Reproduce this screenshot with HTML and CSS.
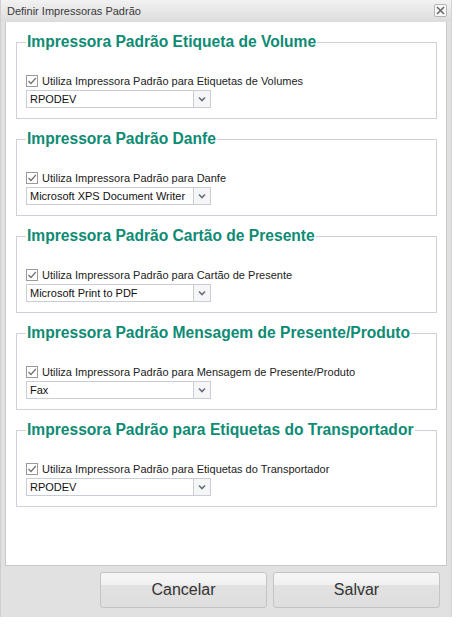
FILE: index.html
```html
<!DOCTYPE html>
<html lang="pt-br">
<head>
  <meta charset="UTF-8" />
  <title>Definir Impressoras Padrão</title>
  <link rel="stylesheet" href="styles.css">
</head>
<body>
<div class="janela">
  <div class="titulo">
    Definir Impressoras Padrão
    <span class="fechar">
      <svg width="9" height="9" viewBox="0 0 9 9"><path d="M1 1L8 8M8 1L1 8" stroke="#6a6a6a" stroke-width="1.6"/></svg>
    </span>
  </div>
  <div class="conteudo">
    <fieldset class="grupo">
      <legend>Impressora Padrão Etiqueta de Volume</legend>
      <label class="check"><span class="caixa"></span>Utiliza Impressora Padrão para Etiquetas de Volumes</label>
      <div class="combo"><span class="valor">RPODEV</span><span class="seta"></span></div>
    </fieldset>
    <fieldset class="grupo">
      <legend>Impressora Padrão Danfe</legend>
      <label class="check"><span class="caixa"></span>Utiliza Impressora Padrão para Danfe</label>
      <div class="combo"><span class="valor">Microsoft XPS Document Writer</span><span class="seta"></span></div>
    </fieldset>
    <fieldset class="grupo">
      <legend>Impressora Padrão Cartão de Presente</legend>
      <label class="check"><span class="caixa"></span>Utiliza Impressora Padrão para Cartão de Presente</label>
      <div class="combo"><span class="valor">Microsoft Print to PDF</span><span class="seta"></span></div>
    </fieldset>
    <fieldset class="grupo">
      <legend>Impressora Padrão Mensagem de Presente/Produto</legend>
      <label class="check"><span class="caixa"></span>Utiliza Impressora Padrão para Mensagem de Presente/Produto</label>
      <div class="combo"><span class="valor">Fax</span><span class="seta"></span></div>
    </fieldset>
    <fieldset class="grupo">
      <legend>Impressora Padrão para Etiquetas do Transportador</legend>
      <label class="check"><span class="caixa"></span>Utiliza Impressora Padrão para Etiquetas do Transportador</label>
      <div class="combo"><span class="valor">RPODEV</span><span class="seta"></span></div>
    </fieldset>
  </div>
  <div class="rodape">
    <button class="botao">Cancelar</button>
    <button class="botao">Salvar</button>
  </div>
</div>
</body>
</html>
```
FILE: styles.css
```css
body {
  margin: 0;
  background: #fff;
  font-family: 'Liberation Sans', Arial, sans-serif;
}
.janela {
  width: 452px;
  height: 617px;
  background: #e1e1e1;
  box-sizing: border-box;
  border-left: 1px solid #cfcfcf;
  border-right: 1px solid #d4d4d4;
  display: flex;
  flex-direction: column;
}
.titulo {
  height: 22px;
  line-height: 22px;
  padding-left: 6px;
  font-size: 11px;
  color: #3a3a3a;
  background: linear-gradient(#f2f2f2, #dcdcdc);
  position: relative;
}
.fechar {
  position: absolute;
  right: 4px;
  top: 4px;
  width: 11px;
  height: 11px;
  border: 1px solid #b5b5b5;
  border-radius: 2px;
  background: #f8f8f8;
  display: flex;
  align-items: center;
  justify-content: center;
}
.fechar svg { display: block; }
.conteudo {
  margin: 0 4px 0 4px;
  height: 544px;
  box-sizing: border-box;
  background: #fff;
  border: 1px solid #c9c9c9;
  border-top: none;
  padding-top: 11px;
}
.grupo {
  margin: 0 9px 11px 10px;
  padding: 0 9px 10px 9px;
  border: 1px solid #cfd0dc;
  min-width: 0;
}
.grupo legend {
  padding: 0 1px;
  font-size: 15.6px;
  line-height: 18px;
  font-weight: bold;
  color: #0e8b74;
  white-space: nowrap;
}
.check {
  display: flex;
  align-items: center;
  margin-top: 23px;
  height: 14px;
  font-size: 11px;
  color: #222;
  white-space: nowrap;
}
.caixa {
  width: 10px;
  height: 10px;
  flex: none;
  border: 1px solid #9a9a9a;
  margin-right: 4px;
  background: #fff url("data:image/svg+xml,%3Csvg xmlns='http://www.w3.org/2000/svg' width='10' height='10'%3E%3Cpath d='M1.5 5L4 7.5L8.8 2' fill='none' stroke='%23707070' stroke-width='1.2'/%3E%3C/svg%3E") no-repeat center;
}
.combo {
  margin-top: 2px;
  width: 185px;
  height: 18px;
  box-sizing: border-box;
  border: 1px solid #c9cdd6;
  display: flex;
  font-size: 11px;
  color: #111;
  white-space: nowrap;
}
.combo .valor {
  flex: 1;
  padding-left: 3px;
  line-height: 16px;
  overflow: hidden;
}
.combo .seta {
  width: 16px;
  border-left: 1px solid #c9cdd6;
  background: #f6f6f6 url("data:image/svg+xml,%3Csvg xmlns='http://www.w3.org/2000/svg' width='8' height='6'%3E%3Cpath d='M1 1.5L4 4.5L7 1.5' fill='none' stroke='%23607080' stroke-width='1.6'/%3E%3C/svg%3E") no-repeat center;
}
.rodape {
  flex: 1;
  display: flex;
  justify-content: flex-end;
  gap: 6px;
  padding: 6px 11px 0 0;
  align-items: flex-start;
}
.botao {
  width: 167px;
  height: 36px;
  border: 1px solid #c4c4c4;
  border-radius: 3px;
  background: linear-gradient(#f7f7f7 0%, #f0f0f0 35%, #e2e2e2 36%, #dedede 100%);
  font-family: 'Liberation Sans', Arial, sans-serif;
  font-size: 16px;
  color: #333;
}
```
